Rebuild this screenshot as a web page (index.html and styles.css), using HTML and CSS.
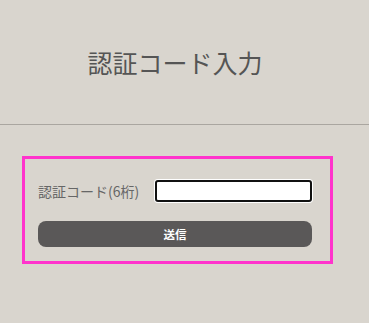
FILE: index.html
```html
<!DOCTYPE html>
<html lang="ja">
<head>
<meta charset="utf-8">
<link rel="stylesheet" href="styles.css">
</head>
<body>
<header class="header">
  <h1 class="title">認証コード入力</h1>
</header>
<main class="main">
  <form class="form">
    <div class="row">
      <label class="label">認証コード(6桁)</label>
      <input class="input" type="text">
    </div>
    <button class="button" type="button">送信</button>
  </form>
</main>
</body>
</html>
```
FILE: styles.css
```css
html, body {
  margin: 0;
  padding: 0;
  background: #d9d5ce;
  font-family: "Noto Sans CJK JP", "Noto Sans", sans-serif;
}
.header {
  height: 124px;
  width: 350px;
  display: flex;
  align-items: center;
  justify-content: center;
}
.title {
  margin: 0;
  font-size: 25px;
  font-weight: 400;
  color: #555;
  line-height: 1;
}
.main {
  border-top: 1px solid #aaa6a0;
  padding-top: 31px;
}
.form {
  margin-left: 22px;
  border: 3px solid #ff33cc;
  padding: 21px 0 14px 13px;
  box-sizing: content-box;
  width: 292px;
}
.row {
  display: flex;
  align-items: center;
  height: 22px;
}
.label {
  width: 117px;
  font-size: 14px;
  color: #666;
  line-height: 22px;
  white-space: nowrap;
}
.input {
  box-sizing: border-box;
  width: 157px;
  height: 22px;
  margin: 0;
  padding: 0 4px;
  background: #fff;
  border: 2px solid #111;
  border-radius: 3px;
  box-shadow: 0 0 0 1px #fff;
  outline: none;
}
.button {
  display: block;
  box-sizing: border-box;
  margin-top: 19px;
  width: 274px;
  height: 26px;
  border: none;
  border-radius: 8px;
  background: #5a5858;
  color: #fff;
  font-family: inherit;
  font-weight: 700;
  font-size: 11.5px;
  padding: 0;
}
```
